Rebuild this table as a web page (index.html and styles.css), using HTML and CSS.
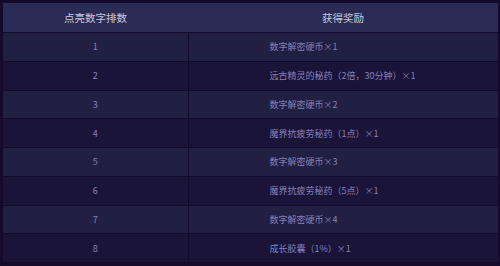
FILE: index.html
```html
<!DOCTYPE html>
<html>
<head>
<meta charset="utf-8">
<link rel="stylesheet" href="styles.css">
</head>
<body>
<table class="reward-table">
  <thead>
    <tr><th class="col-num">点亮数字排数</th><th class="col-reward">获得奖励</th></tr>
  </thead>
  <tbody>
    <tr><td class="num">1</td><td class="reward">数字解密硬币×1</td></tr>
    <tr><td class="num">2</td><td class="reward">远古精灵的秘药（2倍，30分钟）×1</td></tr>
    <tr><td class="num">3</td><td class="reward">数字解密硬币×2</td></tr>
    <tr><td class="num">4</td><td class="reward">魔界抗疲劳秘药（1点）×1</td></tr>
    <tr><td class="num">5</td><td class="reward">数字解密硬币×3</td></tr>
    <tr><td class="num">6</td><td class="reward">魔界抗疲劳秘药（5点）×1</td></tr>
    <tr><td class="num">7</td><td class="reward">数字解密硬币×4</td></tr>
    <tr><td class="num">8</td><td class="reward">成长胶囊（1%）×1</td></tr>
  </tbody>
</table>
</body>
</html>
```

FILE: styles.css
```css
html, body {
  margin: 0;
  padding: 0;
  background: #140b2c;
}
body {
  padding: 3px 2px 0 3px;
  font-family: "Noto Sans CJK SC", "Liberation Sans", sans-serif;
}
.reward-table {
  width: 495px;
  border-collapse: collapse;
  table-layout: fixed;
}
.reward-table th {
  background: #2b2c56;
  color: #c8c8dc;
  font-size: 10.5px;
  font-weight: normal;
  height: 29px;
  padding: 0;
  text-align: center;
  border-bottom: 1px solid #120a28;
}
.col-num { width: 185px; }
.reward-table td {
  height: 27.75px;
  padding: 0;
  font-size: 9px;
  color: #8580bd;
  border-bottom: 1px solid #120a28;
}
.reward-table td.num {
  text-align: center;
  border-right: 1px solid #120a28;
}
.reward-table td.reward {
  text-align: left;
  padding-left: 81px;
}
.reward-table tbody tr:nth-child(odd) td { background: #211f42; }
.reward-table tbody tr:nth-child(even) td { background: #1a1438; }
```
